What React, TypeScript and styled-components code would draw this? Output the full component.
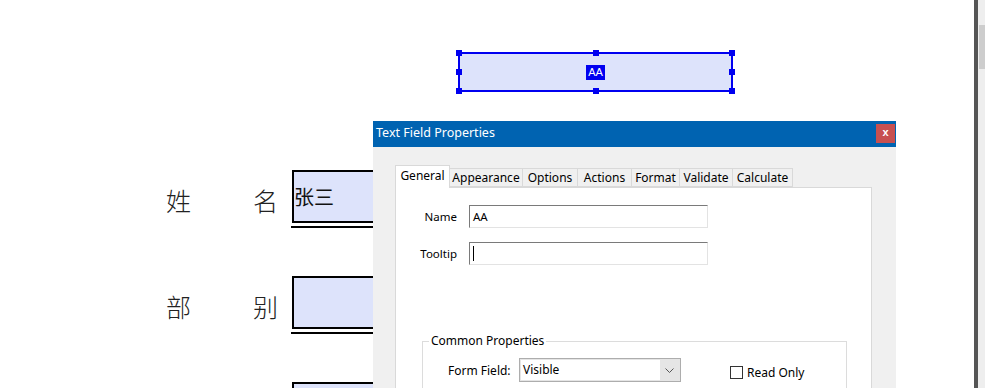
import React from 'react';
import styled, { createGlobalStyle } from 'styled-components';

const GlobalStyle = createGlobalStyle`
  html, body {
    margin: 0;
    padding: 0;
    background: #fff;
    overflow: hidden;
  }
  body {
    font-family: "Noto Sans", "Noto Sans CJK SC", sans-serif;
  }
`;

const Screen = styled.div`
  display: flex;
  width: 985px;
  height: 388px;
  overflow: hidden;
`;

const Canvas = styled.div`
  position: relative;
  flex: 1;
  background: #fff;
  overflow: hidden;
`;

const Splitter = styled.div`
  width: 4px;
  background: #555;
`;

const ScrollTrack = styled.div`
  width: 7px;
  padding-top: 25px;
  box-sizing: border-box;
  background: #eee;
`;

const ScrollThumb = styled.div`
  height: 44px;
  margin-left: 1px;
  background: #cdcdcd;
`;

/* ---- pdf page form ---- */

const Form = styled.div`
  display: flex;
  flex-direction: column;
  gap: 48px;
  padding: 170px 0 0 166px;
`;

const FormRow = styled.div`
  display: flex;
  align-items: flex-start;
`;

const RowLabel = styled.div`
  display: flex;
  justify-content: space-between;
  width: 112px;
  margin-right: 14px;
  padding-top: 4px;
  font-family: "Noto Sans CJK SC", sans-serif;
  font-size: 25px;
  font-weight: 300;
  line-height: 53px;
  color: #222;
`;

const FieldCol = styled.div`
  display: flex;
  flex-direction: column;
  gap: 3px;
`;

const FieldBox = styled.div`
  display: flex;
  align-items: center;
  width: 240px;
  height: 49px;
  border: 2px solid #000;
  background: #dde3fb;
  font-family: "Noto Sans CJK SC", sans-serif;
  font-size: 20px;
  color: #111;
`;

const Underline = styled.div`
  height: 2px;
  margin-left: -1px;
  background: #000;
`;

/* ---- selected field on the canvas ---- */

const Selected = styled.div`
  position: absolute;
  left: 458px;
  top: 52px;
  width: 275px;
  height: 40px;
  box-sizing: border-box;
  border: 2px solid #0000f0;
  background: #dde3fb;
  display: flex;
  align-items: center;
  justify-content: center;
`;

const Handle = styled.div<{ $x: 'l' | 'c' | 'r'; $y: 't' | 'm' | 'b' }>`
  position: absolute;
  width: 6px;
  height: 6px;
  background: #0000f0;
  ${p => (p.$x === 'l' ? 'left: -4px;' : p.$x === 'r' ? 'right: -4px;' : 'left: calc(50% - 3px);')}
  ${p => (p.$y === 't' ? 'top: -4px;' : p.$y === 'b' ? 'bottom: -4px;' : 'top: calc(50% - 3px);')}
`;

const SelText = styled.span`
  background: #0000f0;
  color: #fff;
  font-family: "Liberation Sans", sans-serif;
  font-size: 11px;
  line-height: 15px;
  padding: 0 2px;
`;

/* ---- dialog ---- */

const Dialog = styled.div`
  position: absolute;
  left: 373px;
  top: 121px;
  width: 523px;
  height: 300px;
  background: #f0f0f0;
  font-size: 11.5px;
  color: #000;
`;

const TitleBar = styled.div`
  display: flex;
  justify-content: space-between;
  height: 26px;
  padding-left: 3px;
  background: #0063b1;
`;

const TitleText = styled.span`
  color: #fff;
  font-size: 12.5px;
  line-height: 24px;
`;

const CloseButton = styled.div`
  width: 19px;
  height: 19px;
  margin: 3px 1px 0 0;
  background: #c75050;
  color: #fff;
  font-family: "Liberation Sans", sans-serif;
  font-weight: bold;
  font-size: 11px;
  line-height: 17px;
  text-align: center;
`;

const DialogBody = styled.div`
  padding: 17px 24px 0 22px;
`;

const TabStrip = styled.div`
  display: flex;
  align-items: flex-end;
  height: 23px;
`;

const Tab = styled.div<{ $active?: boolean; $w: number }>`
  position: relative;
  z-index: ${p => (p.$active ? 2 : 1)};
  width: ${p => p.$w}px;
  height: ${p => (p.$active ? 23 : 19)}px;
  margin-left: -1px;
  margin-bottom: ${p => (p.$active ? -1 : 0)}px;
  box-sizing: border-box;
  border: 1px solid #d9d9d9;
  border-bottom: ${p => (p.$active ? 'none' : '1px solid #d9d9d9')};
  background: ${p => (p.$active ? '#fff' : '#f0f0f0')};
  text-align: center;
  font-size: 12px;
  line-height: ${p => (p.$active ? 20 : 18)}px;
  white-space: nowrap;
  &:first-child {
    margin-left: 0;
  }
`;

const Panel = styled.div`
  height: 260px;
  border: 1px solid #d9d9d9;
  background: #fff;
  padding-top: 17px;
`;

const PropGrid = styled.div`
  display: grid;
  grid-template-columns: 61px 239px;
  column-gap: 12px;
  row-gap: 14px;
  align-items: center;
`;

const PropLabel = styled.span`
  text-align: right;
`;

const TextInput = styled.div`
  display: flex;
  align-items: center;
  height: 23px;
  box-sizing: border-box;
  padding-left: 3px;
  border: 1px solid #e3e3e3;
  border-top-color: #7a7a7a;
  border-left-color: #7a7a7a;
  background: #fff;
`;

const Caret = styled.span`
  width: 1px;
  height: 15px;
  background: #000;
`;

const Group = styled.fieldset`
  margin: 68px 24px 0 26px;
  padding: 0 6px 20px;
  border: 1px solid #dcdcdc;
`;

const Legend = styled.legend`
  padding: 0 2px;
  line-height: 16px;
  font-size: 12px;
`;

const GroupRow = styled.div`
  display: flex;
  align-items: center;
  margin: 9px 0 0 19px;
`;

const FieldName = styled.span`
  width: 71px;
  font-size: 12px;
`;

const Select = styled.div`
  display: flex;
  width: 162px;
  height: 24px;
  box-sizing: border-box;
  padding: 1px;
  border: 1px solid #adadad;
  background: #e5e5e5;
  font-size: 12px;
`;

const SelectValue = styled.div`
  flex: 1;
  padding-left: 2px;
  background: #fff;
  line-height: 20px;
`;

const SelectArrow = styled.div`
  display: flex;
  align-items: center;
  justify-content: center;
  width: 19px;
`;

const Check = styled.label`
  display: flex;
  align-items: center;
  gap: 4px;
  margin: 4px 0 0 49px;
  font-size: 12px;
`;

const CheckBox = styled.span`
  width: 13px;
  height: 13px;
  box-sizing: border-box;
  border: 1px solid #333;
  background: #fff;
`;

const rows = [
  { a: '姓', b: '名', value: '张三' },
  { a: '部', b: '别', value: '' },
  { a: '', b: '', value: '' },
];

const tabs = [
  { name: 'General', w: 55 },
  { name: 'Appearance', w: 74 },
  { name: 'Options', w: 56 },
  { name: 'Actions', w: 55 },
  { name: 'Format', w: 49 },
  { name: 'Validate', w: 54 },
  { name: 'Calculate', w: 61 },
];

const App = () => (
  <Screen>
    <GlobalStyle />
    <Canvas>
      <Form>
        {rows.map((r, i) => (
          <FormRow key={i}>
            <RowLabel>
              <span>{r.a}</span>
              <span>{r.b}</span>
            </RowLabel>
            <FieldCol>
              <FieldBox>{r.value}</FieldBox>
              <Underline />
            </FieldCol>
          </FormRow>
        ))}
      </Form>

      <Selected>
        <Handle $x="l" $y="t" />
        <Handle $x="c" $y="t" />
        <Handle $x="r" $y="t" />
        <Handle $x="l" $y="m" />
        <Handle $x="r" $y="m" />
        <Handle $x="l" $y="b" />
        <Handle $x="c" $y="b" />
        <Handle $x="r" $y="b" />
        <SelText>AA</SelText>
      </Selected>

      <Dialog>
        <TitleBar>
          <TitleText>Text Field Properties</TitleText>
          <CloseButton>x</CloseButton>
        </TitleBar>
        <DialogBody>
          <TabStrip>
            {tabs.map((t, i) => (
              <Tab key={t.name} $w={t.w} $active={i === 0}>
                {t.name}
              </Tab>
            ))}
          </TabStrip>
          <Panel>
            <PropGrid>
              <PropLabel>Name</PropLabel>
              <TextInput>AA</TextInput>
              <PropLabel>Tooltip</PropLabel>
              <TextInput>
                <Caret />
              </TextInput>
            </PropGrid>
            <Group>
              <Legend>Common Properties</Legend>
              <GroupRow>
                <FieldName>Form Field:</FieldName>
                <Select>
                  <SelectValue>Visible</SelectValue>
                  <SelectArrow>
                    <svg width="9" height="5" viewBox="0 0 9 5">
                      <path d="M0.5 0.5 L4.5 4.5 L8.5 0.5" fill="none" stroke="#555" strokeWidth="1" />
                    </svg>
                  </SelectArrow>
                </Select>
                <Check>
                  <CheckBox />
                  Read Only
                </Check>
              </GroupRow>
            </Group>
          </Panel>
        </DialogBody>
      </Dialog>
    </Canvas>
    <Splitter />
    <ScrollTrack>
      <ScrollThumb />
    </ScrollTrack>
  </Screen>
);

export default App;
